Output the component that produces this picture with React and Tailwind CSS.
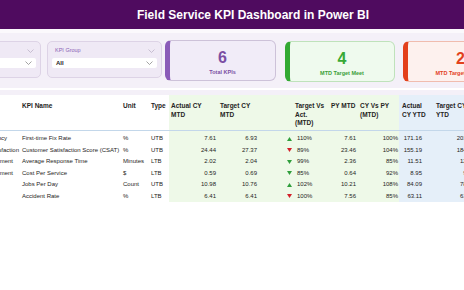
import React from "react";

const Chev = ({ c }) => (
  <svg width="7" height="4" viewBox="0 0 7 4">
    <polyline points="0.5,0.5 3.5,3.5 6.5,0.5" fill="none" stroke={c} strokeWidth="0.8" />
  </svg>
);

const Arrow = ({ up, color }) => (
  <svg width="5" height="4" viewBox="0 0 5 4">
    {up ? <polygon points="2.5,0 5,4 0,4" fill={color} /> : <polygon points="0,0 5,0 2.5,4" fill={color} />}
  </svg>
);

const rows = [
  { g: "Operational Efficiency", gp: "pr-[14px]", name: "First-time Fix Rate", unit: "%", type: "UTB", a: "7.61", t: "6.93", up: true, c: "#2f9e3b", pct: "110%", py: "7.61", cy: "100%", ay: "171.16", ty: "201.53" },
  { g: "Customer Satisfaction", gp: "pr-[2px]", name: "Customer Satisfaction Score (CSAT)", unit: "%", type: "UTB", a: "24.44", t: "27.37", up: false, c: "#d3202a", pct: "89%", py: "23.46", cy: "104%", ay: "155.19", ty: "184.20" },
  { g: "Time Management", gp: "pr-[8px]", name: "Average Response Time", unit: "Minutes", type: "LTB", a: "2.02", t: "2.04", up: false, c: "#2f9e3b", pct: "99%", py: "2.36", cy: "85%", ay: "11.51", ty: "12.08" },
  { g: "Cost Management", gp: "pr-[8px]", name: "Cost Per Service", unit: "$", type: "LTB", a: "0.59", t: "0.69", up: false, c: "#2f9e3b", pct: "85%", py: "0.64", cy: "92%", ay: "8.95", ty: "9.12" },
  { g: "", gp: "", name: "Jobs Per Day", unit: "Count", type: "UTB", a: "10.98", t: "10.76", up: true, c: "#2f9e3b", pct: "102%", py: "10.21", cy: "108%", ay: "84.09", ty: "78.40" },
  { g: "", gp: "", name: "Accident Rate", unit: "%", type: "LTB", a: "6.41", t: "6.41", up: false, c: "#d3202a", pct: "100%", py: "7.56", cy: "85%", ay: "63.11", ty: "61.25" },
];

const G = "bg-[#eef9e8]";
const B = "bg-[#e5eff9]";

export default function App() {
  return (
    <div className="w-[464px] h-[290px] overflow-hidden bg-white font-['Liberation_Sans',Arial,sans-serif] text-[#252423]">
      {/* Title bar */}
      <div className="h-[29px] bg-[#4f0b5f] flex items-center justify-center pl-[42px]">
        <h1 className="text-white font-bold text-[12px] leading-none">Field Service KPI Dashboard in Power BI</h1>
      </div>
      <div className="h-[4px] bg-[#fbf9fc]" />

      {/* Filter / card panel */}
      <div className="h-[55px] bg-[#f4f0f8] flex items-start pt-[7px] overflow-hidden">
        {/* Slicer 1 */}
        <div className="ml-[-60px] mt-px h-[37px] w-[101px] shrink-0 rounded-[5px] border border-[#ddd3e6] bg-[#efe9f5] flex flex-col">
          <div className="flex items-center justify-between pl-[7px] pr-[6px] pt-[5px] h-[12px]">
            <span className="text-[5.5px] text-[#8a5fb5] leading-[7px]">Month</span>
            <Chev c="#bdb3c8" />
          </div>
          <div className="mx-[4px] mt-[4px] h-[10px] bg-white rounded-[2px] flex items-center justify-between px-[4px]">
            <span className="text-[6px] font-bold leading-none">All</span>
            <Chev c="#8c8c8c" />
          </div>
        </div>
        {/* Slicer 2 */}
        <div className="ml-[6px] mt-px h-[37px] w-[115px] shrink-0 rounded-[5px] border border-[#ddd3e6] bg-[#efe9f5] flex flex-col">
          <div className="flex items-center justify-between pl-[7px] pr-[6px] pt-[5px] h-[12px]">
            <span className="text-[5.5px] text-[#8a5fb5] leading-[7px]">KPI Group</span>
            <Chev c="#bdb3c8" />
          </div>
          <div className="mx-[4px] mt-[4px] h-[10px] bg-white rounded-[2px] flex items-center justify-between px-[4px]">
            <span className="text-[6px] font-bold leading-none">All</span>
            <Chev c="#8c8c8c" />
          </div>
        </div>
        {/* Card 1 */}
        <div className="ml-[3px] h-[41px] w-[111px] shrink-0 rounded-[6px] border border-[#cdc2d9] border-l-[5px] border-l-[#8a5bb8] bg-[#f1ecf8] flex flex-col items-center pt-[9px]">
          <span className="text-[16px] font-bold leading-[16px] text-[#7b4ea3]">6</span>
          <span className="mt-[3px] text-[5.5px] font-bold leading-[7px] text-[#7b4ea3]">Total KPIs</span>
        </div>
        {/* Card 2 */}
        <div className="ml-[9px] mt-px h-[41px] w-[110px] shrink-0 rounded-[6px] border border-[#bfe2bb] border-l-[5px] border-l-[#33a933] bg-[#effaee] flex flex-col items-center pt-[9px]">
          <span className="text-[16px] font-bold leading-[16px] text-[#38a936]">4</span>
          <span className="mt-[3px] text-[5.5px] font-bold leading-[7px] text-[#3a9f38]">MTD Target Meet</span>
        </div>
        {/* Card 3 */}
        <div className="ml-[8px] mt-px h-[41px] w-[111px] shrink-0 rounded-[6px] border border-[#f0bcae] border-l-[5px] border-l-[#e3401c] bg-[#fdf1ee] flex flex-col items-center pt-[9px]">
          <span className="text-[16px] font-bold leading-[16px] text-[#e2411e]">2</span>
          <span className="mt-[3px] text-[5.5px] font-bold leading-[7px] text-[#e2411e] whitespace-nowrap">MTD Target Missed</span>
        </div>
      </div>
      <div className="h-[2px] bg-white" />
      <div className="h-[5px] bg-[#f4f0f8]" />

      {/* Table */}
      <div className="w-[464px] overflow-hidden">
        <div className="w-[480px]">
          {/* Header */}
          <div className="flex h-[36px] border-b border-[#c3d7ea] text-[6.5px] font-bold leading-[8.5px]">
            <div className="w-[21px] shrink-0" />
            <div className="w-[102px] shrink-0 pl-px pt-[7px]">KPI Name</div>
            <div className="w-[28px] shrink-0 pt-[7px]">Unit</div>
            <div className="w-[18px] shrink-0 pt-[7px]">Type</div>
            <div className={`w-[50px] shrink-0 pl-[2px] pt-[7px] ${G}`}>Actual CY<br />MTD</div>
            <div className={`w-[41px] shrink-0 pl-px pt-[7px] ${G}`}>Target CY<br />MTD</div>
            <div className={`w-[68px] shrink-0 pl-[35px] pt-[7px] ${G}`}>Target Vs<br />Act.<br />(MTD)</div>
            <div className={`w-[31px] shrink-0 pl-[3px] pt-[7px] whitespace-nowrap ${G}`}>PY MTD</div>
            <div className={`w-[40px] shrink-0 pl-px pt-[7px] ${G}`}>CY Vs PY<br />(MTD)</div>
            <div className={`w-[29px] shrink-0 pl-[3px] pt-[7px] ${B}`}>Actual<br />CY YTD</div>
            <div className={`w-[52px] shrink-0 pl-[8px] pt-[7px] ${B}`}>Target CY<br />YTD</div>
          </div>
          {/* Spacer */}
          <div className="flex h-[2px]">
            <div className="w-[169px] shrink-0" />
            <div className={`w-[230px] shrink-0 ${G}`} />
            <div className={`w-[81px] shrink-0 ${B}`} />
          </div>
          {rows.map((r, i) => (
            <div key={i} className="flex h-[11.5px] items-center text-[6px] leading-[11.5px] whitespace-nowrap">
              <div className={`w-[21px] h-full shrink-0 overflow-hidden flex justify-end ${r.gp}`}>
                <span className="shrink-0">{r.g}</span>
              </div>
              <div className="w-[102px] h-full shrink-0 pl-px">{r.name}</div>
              <div className="w-[28px] h-full shrink-0">{r.unit}</div>
              <div className="w-[18px] h-full shrink-0">{r.type}</div>
              <div className={`w-[50px] h-full shrink-0 pr-[3px] text-right ${G}`}>{r.a}</div>
              <div className={`w-[41px] h-full shrink-0 pr-[3px] text-right ${G}`}>{r.t}</div>
              <div className={`w-[68px] h-full shrink-0 pl-[27px] flex items-center ${G}`}>
                <Arrow up={r.up} color={r.c} />
                <span className="ml-[5px]">{r.pct}</span>
              </div>
              <div className={`w-[31px] h-full shrink-0 pr-[3px] text-right ${G}`}>{r.py}</div>
              <div className={`w-[40px] h-full shrink-0 pr-px text-right ${G}`}>{r.cy}</div>
              <div className={`w-[29px] h-full shrink-0 pr-[6px] text-right ${B}`}>{r.ay}</div>
              <div className={`w-[52px] h-full shrink-0 pr-[5px] text-right ${B}`}>{r.ty}</div>
            </div>
          ))}
        </div>
      </div>
    </div>
  );
}
